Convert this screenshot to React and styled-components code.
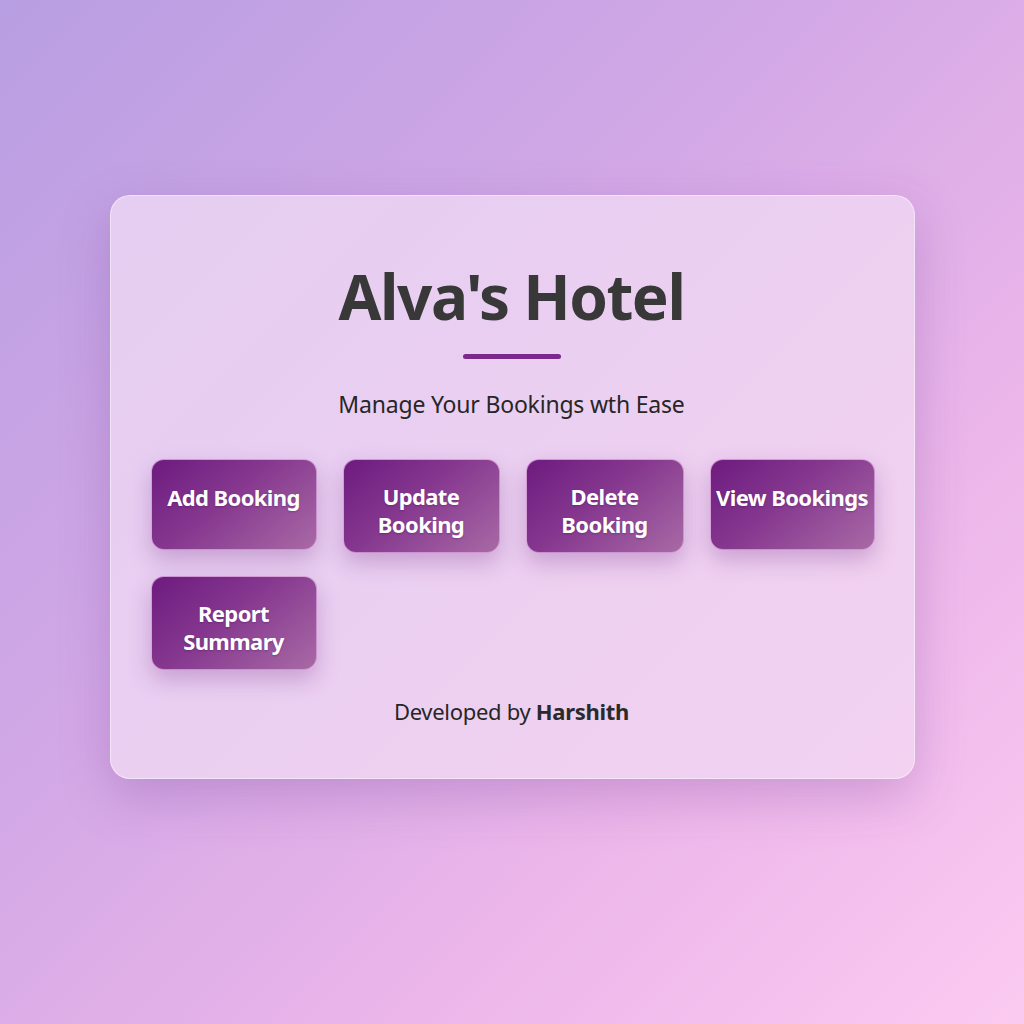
import React from "react";
import styled, { createGlobalStyle } from "styled-components";

const GlobalStyle = createGlobalStyle`
html, body {
  margin:0;
  padding:0;
}
body {
  font-family: "Noto Sans", "Open Sans", sans-serif;
}
`

const Page = styled.div`
width:1024px;
height:1024px;
display:flex;
align-items:flex-start;
justify-content:center;
padding-top:195px;
box-sizing:border-box;
background: linear-gradient(135deg, #b89ee2 0%, #d3a8e6 40%, #ecb6ea 70%, #fbcaf1 100%);
`

const Card = styled.div`
width:805px;
height:584px;
box-sizing:border-box;
padding:62px 41px 0 40px;
border-radius:20px;
background: linear-gradient(135deg, rgba(236,216,244,0.82) 0%, rgba(242,214,242,0.82) 100%);
border:1px solid rgba(255,255,255,0.45);
box-shadow: 0 18px 50px rgba(120, 60, 150, 0.28);
display:flex;
flex-direction:column;
align-items:center;
`

const Title = styled.h1`
margin:0;
font-size:62px;
line-height:76px;
font-weight:700;
letter-spacing:-1.5px;
color:#383838;
`

const Bar = styled.div`
width:98px;
height:5px;
border-radius:3px;
background:#7b2a8c;
margin-top:20px;
`

const Subtitle = styled.p`
margin:30px 0 0;
font-size:23px;
line-height:30px;
color:#262626;
letter-spacing:-0.2px;
`

const Grid = styled.div`
margin-top:40px;
width:100%;
display:grid;
grid-template-columns: 166px 157px 158px 165px;
column-gap:26px;
row-gap:23px;
align-items:start;
`

const Button = styled.button`
height:${props => props.$tall ? 94 : 91}px;
box-sizing:border-box;
border-radius:13px;
border:1px solid rgba(240,190,240,0.7);
background: linear-gradient(140deg, #6d1b7f 0%, #86388f 45%, #a86aa5 100%);
box-shadow: 0 10px 22px rgba(110, 40, 130, 0.28);
color:#fff;
font-family:"Noto Sans", "Open Sans", sans-serif;
font-weight:700;
font-size:22px;
line-height:28px;
letter-spacing:-0.6px;
padding:${props => props.$tall ? 22 : 23}px 4px 0;
display:flex;
align-items:flex-start;
justify-content:center;
text-align:center;
cursor:pointer;
text-shadow: 0 1px 2px rgba(60,10,70,0.3);
`

const Footer = styled.p`
margin:26px 0 0;
font-size:22px;
line-height:30px;
color:#262626;
letter-spacing:-0.3px;
b {
  font-weight:700;
  color:#2a2a2a;
}
`

const buttons = [
  { label: "Add Booking" },
  { label: <>Update<br />Booking</>, tall: true },
  { label: <>Delete<br />Booking</>, tall: true },
  { label: "View Bookings" },
  { label: <>Report<br />Summary</>, tall: true },
];

export default function App() {
  return (
    <>
      <GlobalStyle />
      <Page>
        <Card>
          <Title>Alva's Hotel</Title>
          <Bar />
          <Subtitle>Manage Your Bookings wth Ease</Subtitle>
          <Grid>
            {buttons.map((b, i) => (
              <Button key={i} $tall={b.tall}>{b.label}</Button>
            ))}
          </Grid>
          <Footer>Developed by <b>Harshith</b></Footer>
        </Card>
      </Page>
    </>
  );
}
